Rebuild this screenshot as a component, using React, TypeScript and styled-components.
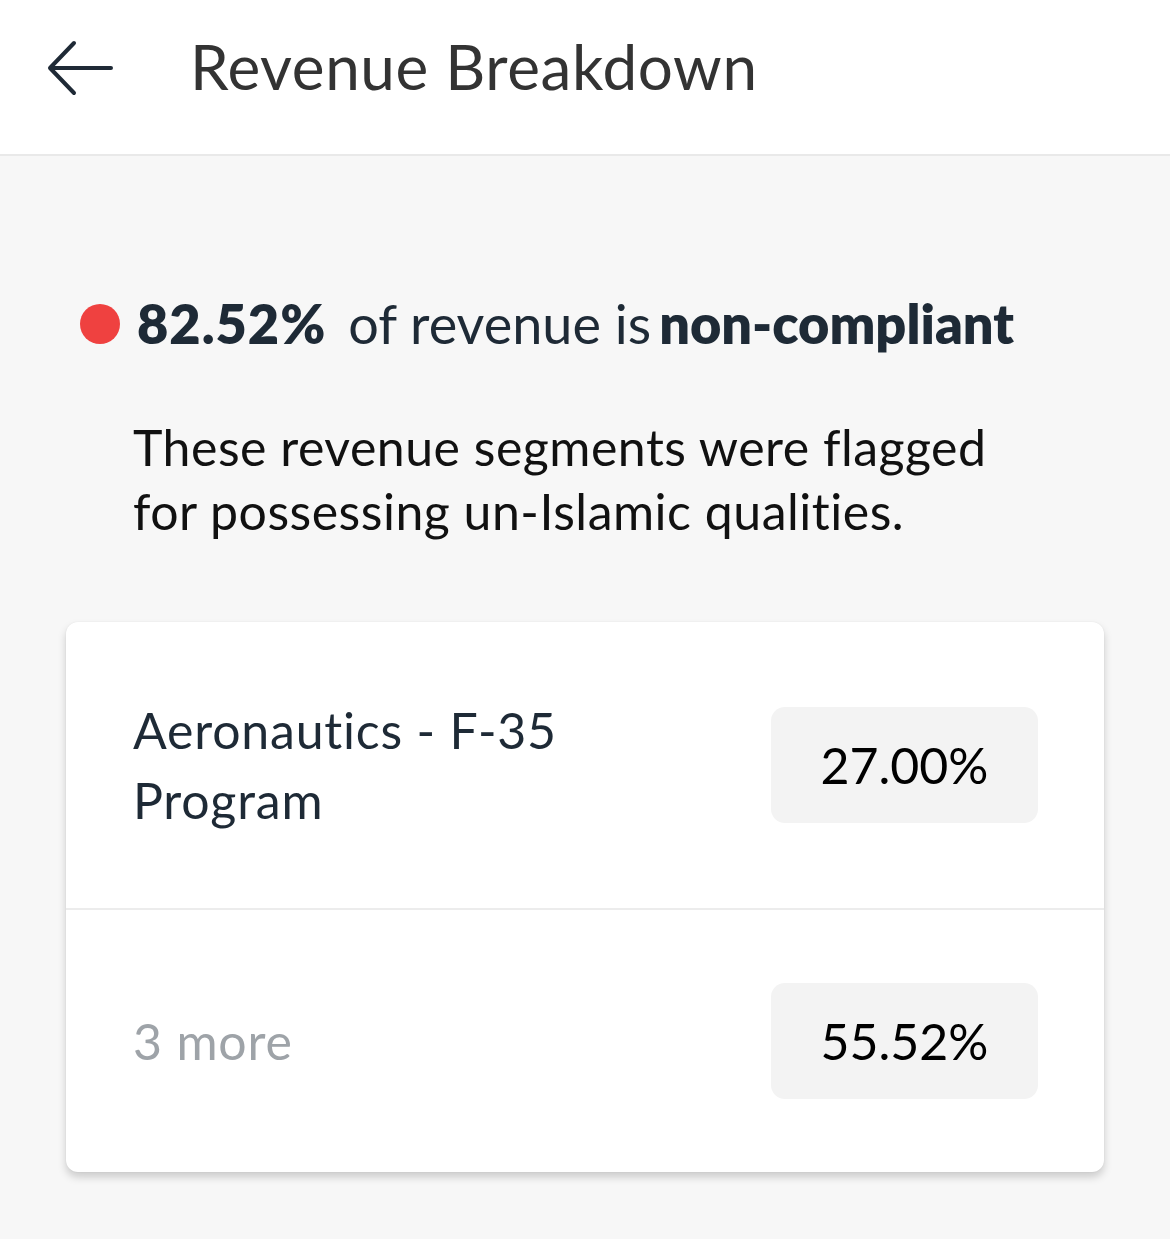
import React from "react";
import styled, { createGlobalStyle } from "styled-components";

const Global = createGlobalStyle`
  html, body { margin: 0; padding: 0; background: #f7f7f7; }
  body { font-family: Lato, "Noto Sans", sans-serif; }
`;

const Page = styled.div`
  width: 1170px;
  min-height: 1239px;
  background: #f7f7f7;
  display: flex;
  flex-direction: column;
`;

const Header = styled.header`
  height: 156px;
  background: #ffffff;
  border-bottom: 2px solid #e9e9e9;
  display: flex;
  align-items: center;
  padding: 0 0 22px 46px;
  gap: 76px;
  box-sizing: border-box;
`;

const BackButton = styled.button`
  border: 0;
  background: none;
  padding: 0;
  width: 68px;
  height: 60px;
  display: flex;
  align-items: center;
  justify-content: center;
  color: #1f2a36;
  margin-top: 4px;
`;

const Title = styled.h1`
  margin: 0;
  font-size: 62px;
  font-weight: 400;
  color: #333333;
  letter-spacing: 0.6px;
`;

const Content = styled.main`
  padding: 133px 66px 0 66px;
  display: flex;
  flex-direction: column;
`;

const Summary = styled.div`
  display: flex;
  align-items: center;
  padding-left: 14px;
  font-size: 54px;
  line-height: 70px;
  color: #1e2a36;
`;

const Dot = styled.span`
  width: 40px;
  height: 40px;
  border-radius: 50%;
  background: #ef4140;
  margin-right: 17px;
  flex-shrink: 0;
`;

const Strong = styled.strong<{ $gapRight?: number; $spacing?: number }>`
  font-weight: 800;
  margin-right: ${(p) => p.$gapRight ?? 0}px;
  letter-spacing: ${(p) => p.$spacing ?? 0}px;
`;

const Plain = styled.span`
  font-weight: 400;
  margin-right: 8px;
`;

const Description = styled.p`
  margin: 56px 0 0 67px;
  font-size: 50px;
  line-height: 64px;
  letter-spacing: 0.5px;
  color: #111111;
  max-width: 870px;
`;

const Card = styled.section`
  margin-top: 79px;
  width: 1038px;
  background: #ffffff;
  border-radius: 12px;
  box-shadow: 0 5px 8px rgba(0, 0, 0, 0.18), 0 0 2px rgba(0, 0, 0, 0.06);
  display: flex;
  flex-direction: column;
  overflow: hidden;
`;

const Row = styled.div<{ $height: number }>`
  height: ${(p) => p.$height}px;
  display: flex;
  align-items: center;
  justify-content: space-between;
  padding: 0 66px 0 67px;
  & + & {
    border-top: 2px solid #ececec;
  }
`;

const Label = styled.div<{ $muted?: boolean }>`
  font-size: 50px;
  line-height: 70px;
  letter-spacing: 0.8px;
  color: ${(p) => (p.$muted ? "#9ea3a8" : "#1e2a36")};
  max-width: 470px;
`;

const Pill = styled.div`
  width: 267px;
  height: 116px;
  border-radius: 14px;
  background: #f3f3f3;
  display: flex;
  align-items: center;
  justify-content: center;
  font-size: 50px;
  color: #000000;
`;

const ArrowIcon = () => (
  <svg width="66" height="56" viewBox="0 0 66 56" fill="none">
    <path
      d="M64 28H4M27 3L3 28L27 53"
      stroke="currentColor"
      strokeWidth="4"
      strokeLinecap="round"
      strokeLinejoin="round"
    />
  </svg>
);

export default function App() {
  return (
    <Page>
      <Global />
      <Header>
        <BackButton aria-label="Back">
          <ArrowIcon />
        </BackButton>
        <Title>Revenue Breakdown</Title>
      </Header>
      <Content>
        <Summary>
          <Dot />
          <Strong $gapRight={22} $spacing={1}>82.52%</Strong>
          <Plain>of revenue is</Plain>
          <Strong>non-compliant</Strong>
        </Summary>
        <Description>
          These revenue segments were flagged for possessing un-Islamic qualities.
        </Description>
        <Card>
          <Row $height={286}>
            <Label>Aeronautics - F-35 Program</Label>
            <Pill>27.00%</Pill>
          </Row>
          <Row $height={262}>
            <Label $muted>3 more</Label>
            <Pill>55.52%</Pill>
          </Row>
        </Card>
      </Content>
    </Page>
  );
}
